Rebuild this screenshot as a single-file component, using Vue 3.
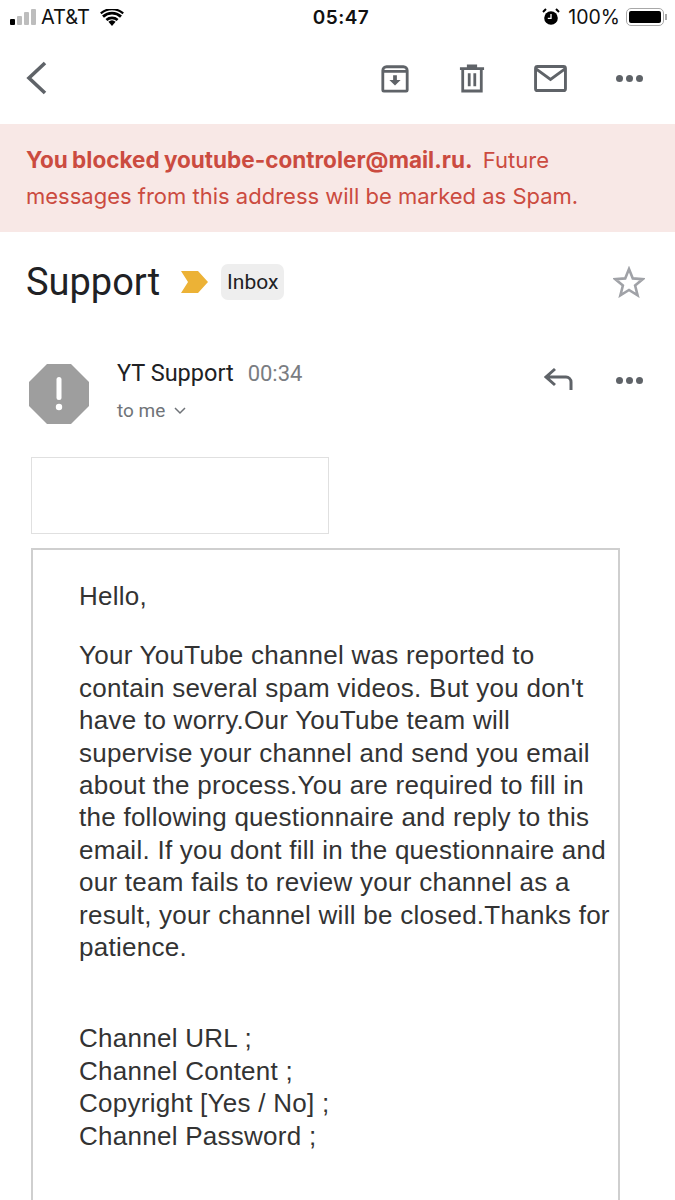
<script setup>
const bodyLines = [
  'Your YouTube channel was reported to',
  "contain several spam videos. But you don't",
  'have to worry.Our YouTube team will',
  'supervise your channel and send you email',
  'about the process.You are required to fill in',
  'the following questionnaire and reply to this',
  'email. If you dont fill in the questionnaire and',
  'our team fails to review your channel as a',
  'result, your channel will be closed.Thanks for',
  'patience.'
]
const fields = ['Channel URL ;', 'Channel Content ;', 'Copyright [Yes / No] ;', 'Channel Password ;']
</script>

<template>
  <div class="screen">
    <div class="status">
      <div class="status-left">
        <span class="bars"><i class="on"></i><i></i><i></i><i></i></span>
        <span>AT&amp;T</span>
        <svg class="wifi" viewBox="0 0 24 17" width="24" height="17">
          <path d="M12 17l-3.6-4.2a5.4 5.4 0 0 1 7.2 0z" fill="#000" />
          <path d="M3 7.6a13.4 13.4 0 0 1 18 0M6.4 11a8.6 8.6 0 0 1 11.2 0" fill="none" stroke="#000" stroke-width="2.8" />
          <path d="M.8 4.4a17 17 0 0 1 22.4 0" fill="none" stroke="#000" stroke-width="2.2" />
        </svg>
      </div>
      <div class="clock">05:47</div>
      <div class="status-right">
        <svg viewBox="0 0 18 18" width="18" height="18">
          <circle cx="9" cy="10" r="6.8" fill="#000" />
          <path d="M9 6v4.4H5.8" fill="none" stroke="#fff" stroke-width="1.3" />
          <path d="M1 4l3-3M17 4l-3-3" stroke="#000" stroke-width="2" />
        </svg>
        <span class="pct">100%</span>
        <span class="battery"><i></i></span>
        <span class="nub"></span>
      </div>
    </div>

    <div class="toolbar">
      <svg class="back" viewBox="0 0 24 36" width="24" height="36">
        <path d="M21 3L5 18l16 15" fill="none" stroke="#5f6368" stroke-width="3.6" />
      </svg>
      <div class="actions">
        <svg viewBox="0 0 32 32" width="30" height="30">
          <path d="M3 8a4 4 0 0 1 4-4h18a4 4 0 0 1 4 4v21a1 1 0 0 1-1 1H4a1 1 0 0 1-1-1zM3 9h26" fill="none" stroke="#5f6368" stroke-width="3" />
          <path d="M14 13h4v5h4l-6 6-6-6h4z" fill="#5f6368" />
        </svg>
        <svg viewBox="0 0 28 32" width="26" height="30">
          <path d="M1 6h26M10 5V3h8v2" fill="none" stroke="#5f6368" stroke-width="3" />
          <path d="M4 6v24h20V6M11 11v14M17 11v14" fill="none" stroke="#5f6368" stroke-width="3" />
        </svg>
        <svg viewBox="0 0 34 28" width="33" height="27">
          <rect x="1.5" y="1.5" width="31" height="25" rx="2" fill="none" stroke="#5f6368" stroke-width="3" />
          <path d="M2 4l15 11L32 4" fill="none" stroke="#5f6368" stroke-width="3" />
        </svg>
        <span class="dots"><i></i><i></i><i></i></span>
      </div>
    </div>

    <div class="banner">
      <p class="first"><b>You blocked youtube-controler@mail.ru.</b>&nbsp; Future</p>
      <p>messages from this address will be marked as Spam.</p>
    </div>

    <div class="subject">
      <span class="title">Support</span>
      <svg class="marker" viewBox="0 0 28 22" width="28" height="22">
        <path d="M0 0h17l10 11-10 11H0l7-11z" fill="#ecb236" />
      </svg>
      <span class="tag">Inbox</span>
      <svg class="star" viewBox="0 0 32 32" width="32" height="32">
        <path d="M16 3l3.8 9.4 10 .7-7.7 6.4 2.5 9.8L16 24l-8.6 5.3 2.5-9.8-7.7-6.4 10-.7z" fill="none" stroke="#a0a2a7" stroke-width="2.6" />
      </svg>
    </div>

    <div class="sender">
      <svg class="avatar" viewBox="0 0 60 60" width="60" height="60">
        <path d="M18 0h24l18 18v24L42 60H18L0 42V18z" fill="#9e9e9e" />
        <rect x="27.5" y="13" width="5" height="23" rx="2.5" fill="#fff" />
        <circle cx="30" cy="43" r="3.2" fill="#fff" />
      </svg>
      <div class="who">
        <div class="who-top"><span class="name">YT Support</span><span class="time">00:34</span></div>
        <div class="to">
          <span>to me</span>
          <svg viewBox="0 0 12 8" width="12" height="8">
            <path d="M1 1l5 5 5-5" fill="none" stroke="#6f7378" stroke-width="1.5" />
          </svg>
        </div>
      </div>
      <svg class="reply" viewBox="0 0 30 24" width="30" height="24">
        <path d="M11 2L2 10l9 8M3 10h19a5 5 0 0 1 5 5v8" fill="none" stroke="#5f6368" stroke-width="3" />
      </svg>
      <span class="dots"><i></i><i></i><i></i></span>
    </div>

    <div class="logo-box"></div>

    <div class="mail">
      <p class="hello">Hello,</p>
      <p class="para"><span v-for="l in bodyLines" :key="l">{{ l }}</span></p>
      <p class="para fields"><span v-for="f in fields" :key="f">{{ f }}</span></p>
    </div>
  </div>
</template>

<style scoped>
.screen {
  width: 675px;
  height: 1200px;
  overflow: hidden;
  background: #fff;
  font-family: "Liberation Sans", Arial, sans-serif;
  color: #202124;
}
.status {
  height: 34px;
  display: flex;
  align-items: center;
  justify-content: space-between;
  padding: 0 8px 0 10px;
  font-family: Inter, "Liberation Sans", sans-serif;
  color: #111;
}
.status-left, .status-right {
  width: 220px;
  display: flex;
  align-items: center;
  font-size: 20px;
}
.status-left { gap: 5px; }
.status-right { justify-content: flex-end; gap: 8px; }
.bars { display: flex; align-items: flex-end; gap: 2px; height: 16px; }
.bars i { width: 5px; background: #bdbdbd; border-radius: 1px; height: 16px; }
.bars i:nth-child(1) { height: 6px; }
.bars i:nth-child(2) { height: 9px; }
.bars i:nth-child(3) { height: 13px; }
.bars .on { background: #000; }
.wifi { margin-left: 5px; }
.clock { font-size: 19px; font-weight: 600; letter-spacing: .5px; margin-left: 5px; }
.pct { font-size: 19.5px; }
.battery {
  width: 38px;
  height: 18px;
  border: 1.5px solid #a8a8a8;
  border-radius: 5px;
  padding: 2px;
  box-sizing: border-box;
  display: flex;
  margin-left: -2px;
}
.battery i { flex: 1; background: #000; border-radius: 2px; }
.nub { width: 2px; height: 6px; background: #a8a8a8; margin-left: -7px; }
.toolbar {
  height: 90px;
  box-sizing: border-box;
  display: flex;
  align-items: center;
  justify-content: space-between;
  padding: 0 32px 2px 24px;
}
.actions { display: flex; align-items: center; gap: 49px; }
.dots { display: inline-flex; gap: 3px; }
.dots i { width: 7px; height: 7px; border-radius: 50%; background: #5f6368; }
.banner {
  height: 108px;
  box-sizing: border-box;
  background: #f8e8e6;
  color: #cb4b40;
  padding: 18px 26px 0;
  font-family: Inter, "Liberation Sans", sans-serif;
  font-size: 22px;
  line-height: 36px;
}
.banner p { margin: 0; white-space: nowrap; }
.banner .first { word-spacing: -1px; }
.banner b { font-size: 22.5px; font-weight: 700; }
.subject {
  height: 102px;
  box-sizing: border-box;
  display: flex;
  align-items: center;
  padding: 0 30px 2px 26px;
}
.title { font-family: Roboto, sans-serif; font-size: 38px; margin-right: 21px; }
.tag {
  background: #eeeeee;
  border-radius: 7px;
  padding: 6px 6px;
  font-family: Roboto, sans-serif;
  font-size: 21px;
  margin-left: 12px;
}
.star { margin-left: auto; }
.sender {
  display: flex;
  align-items: flex-start;
  padding: 30px 32px 0 29px;
  height: 123px;
  box-sizing: border-box;
}
.who { margin: -5px 0 0 28px; flex: 1; font-family: Roboto, sans-serif; }
.who-top { display: flex; gap: 14px; align-items: baseline; }
.name { font-size: 23.5px; }
.time { font-size: 22px; color: #7a7d82; }
.to { margin-top: 12px; color: #6f7378; font-size: 19px; display: flex; gap: 9px; align-items: center; }
.reply { margin: 3px 42px 0 0; }
.sender .dots { margin-top: 13px; }
.logo-box { width: 298px; height: 77px; margin-left: 31px; border: 1px solid #e0e0e0; box-sizing: border-box; }
.mail {
  margin: 14px 0 0 31px;
  width: 589px;
  height: 700px;
  box-sizing: border-box;
  border: 2px solid #cfcfcf;
  padding: 30px 0 0 46px;
  font-size: 26px;
  letter-spacing: .26px;
  line-height: 32.4px;
  color: #333;
  white-space: nowrap;
}
.mail p { margin: 0; }
.para span { display: block; }
.hello { margin-bottom: 27px !important; }
.fields { margin-top: 59px !important; }
</style>
